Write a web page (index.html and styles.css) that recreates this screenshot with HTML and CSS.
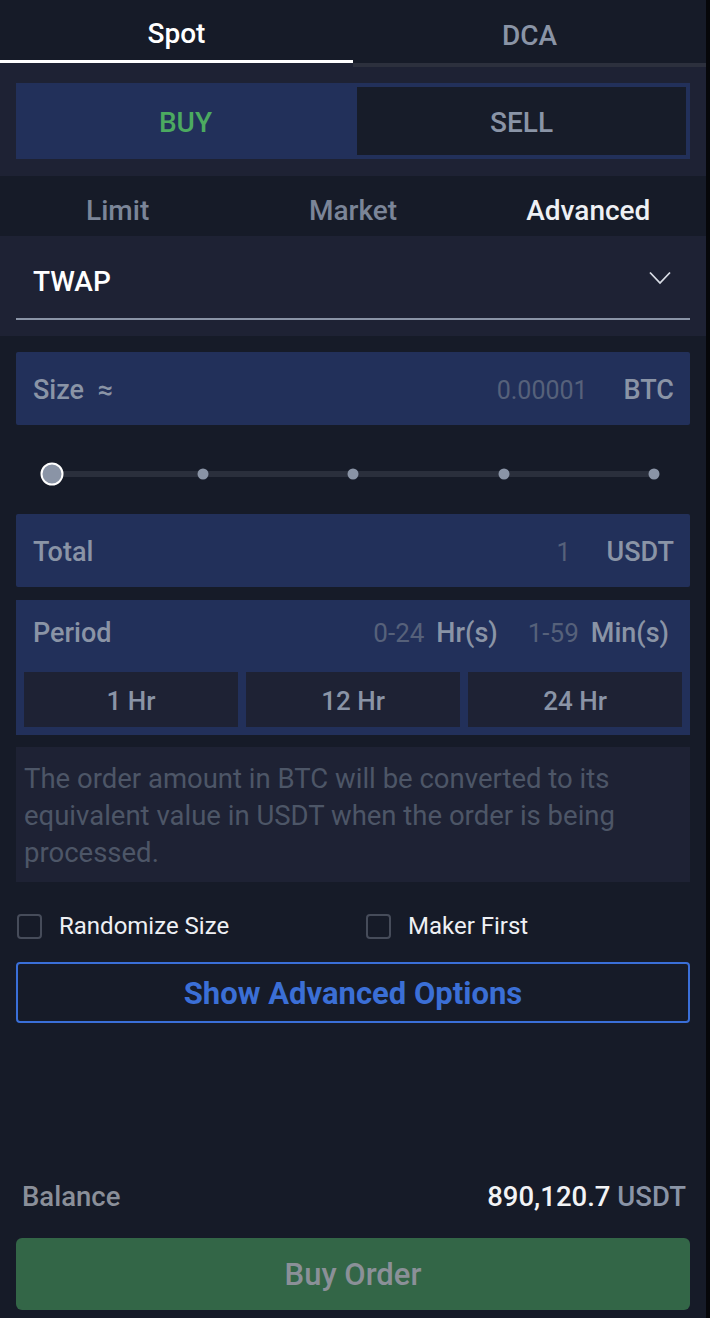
FILE: index.html
```html
<!DOCTYPE html>
<html>
<head>
  <link rel="stylesheet" href="styles.css">
</head>
<body>
  <div class="panel">
    <div class="tabs">
      <div class="tab active">Spot</div>
      <div class="tab dca">DCA</div>
    </div>

    <div class="side-section">
      <div class="side-switch">
        <div class="side buy">BUY</div>
        <div class="side sell">SELL</div>
      </div>
    </div>

    <div class="order-types">
      <div class="order-type">Limit</div>
      <div class="order-type">Market</div>
      <div class="order-type active">Advanced</div>
    </div>

    <div class="algo-section">
      <div class="algo-select">
        <span>TWAP</span>
        <svg class="chevron" width="22" height="14" viewBox="0 0 22 14">
          <polyline points="1,1.5 11,12 21,1.5" fill="none" stroke="#d9dde5" stroke-width="1.8"/>
        </svg>
      </div>
    </div>

    <div class="form">
      <div class="field">
        <span class="field-label">Size &nbsp;≈</span>
        <span class="field-right">
          <span class="field-value">0.00001</span>
          <span class="field-unit">BTC</span>
        </span>
      </div>

      <div class="slider">
        <div class="slider-track"></div>
        <span class="slider-dot" style="left: 25%"></span>
        <span class="slider-dot" style="left: 50%"></span>
        <span class="slider-dot" style="left: 75%"></span>
        <span class="slider-dot" style="left: 100%"></span>
        <span class="slider-thumb" style="left: 0%"></span>
      </div>

      <div class="field">
        <span class="field-label">Total</span>
        <span class="field-right">
          <span class="field-value">1</span>
          <span class="field-unit">USDT</span>
        </span>
      </div>

      <div class="period">
        <div class="period-head">
          <span class="field-label">Period</span>
          <span class="period-inputs">
            <span class="field-value">0-24</span>
            <span class="field-unit">Hr(s)</span>
            <span class="field-value gap">1-59</span>
            <span class="field-unit">Min(s)</span>
          </span>
        </div>
        <div class="period-presets">
          <div class="preset">1 Hr</div>
          <div class="preset">12 Hr</div>
          <div class="preset">24 Hr</div>
        </div>
      </div>

      <div class="notice">
        The order amount in BTC will be converted to its equivalent value in USDT when the order is being processed.
      </div>

      <div class="check-row">
        <label class="check"><span class="check-box"></span>Randomize Size</label>
        <label class="check"><span class="check-box"></span>Maker First</label>
      </div>

      <button class="outline-btn">Show Advanced Options</button>
    </div>

    <div class="footer">
      <div class="balance">
        <span class="balance-label">Balance</span>
        <span class="balance-value">890,120.7 <span class="balance-unit">USDT</span></span>
      </div>
      <button class="submit-btn">Buy Order</button>
    </div>
  </div>
</body>
</html>
```

FILE: styles.css
```css
body {
  margin: 0;
  background: #06070a;
  font-family: Roboto, 'Noto Sans', sans-serif;
  color: #8a94a6;
}

.panel {
  width: 706px;
  height: 1318px;
  background: #161b28;
  display: flex;
  flex-direction: column;
}

/* Spot / DCA tabs */
.tabs {
  display: flex;
  align-items: flex-start;
  background: #1e2234;
}

.tab {
  flex: 1;
  height: 63px;
  display: flex;
  align-items: center;
  justify-content: center;
  background: #161b28;
  font-size: 28px;
  font-weight: 500;
  color: #8a94a6;
  box-sizing: border-box;
  padding-top: 7px;
}

.tab.active {
  color: #fff;
  border-bottom: 3px solid #fff;
}

.tab.dca {
  height: 67px;
  border-bottom: 4px solid #2c303d;
  padding-top: 8px;
}

/* Buy / Sell switch */
.side-section {
  background: #1e2234;
  padding: 16px 16px 17px;
}

.side-switch {
  display: flex;
  height: 76px;
  padding: 4px;
  box-sizing: border-box;
  background: #22305a;
}

.side {
  display: flex;
  align-items: center;
  justify-content: center;
  font-size: 28px;
  font-weight: 500;
  padding-top: 2px;
}

.side.buy {
  width: 337px;
  padding-right: 6px;
  box-sizing: border-box;
  color: #4caa60;
}

.side.sell {
  flex: 1;
  background: #171c29;
  color: #8a94a6;
}

/* Limit / Market / Advanced */
.order-types {
  display: flex;
  height: 60px;
  box-sizing: border-box;
  padding-top: 8px;
}

.order-type {
  flex: 1;
  display: flex;
  align-items: center;
  justify-content: center;
  font-size: 28px;
  font-weight: 500;
  color: #7b8598;
}

.order-type.active {
  color: #eef0f4;
}

/* TWAP select */
.algo-section {
  background: #1e2234;
  padding: 0 16px 16px;
}

.algo-select {
  height: 84px;
  box-sizing: border-box;
  border-bottom: 2px solid #8a94a6;
  display: flex;
  align-items: center;
  justify-content: space-between;
  padding: 8px 19px 0 17px;
  font-size: 28px;
  font-weight: 500;
  color: #fff;
}

.chevron {
  margin-top: -7px;
}

/* form */
.form {
  padding: 16px 16px 0;
}

.field {
  height: 73px;
  box-sizing: border-box;
  padding: 3px 16px 0 17px;
  background: #22305a;
  border-radius: 2px;
  display: flex;
  align-items: center;
  justify-content: space-between;
}

.field-label {
  font-size: 27px;
  font-weight: 500;
  color: #8a94a6;
}

.field-right {
  display: flex;
  align-items: center;
}

.field-value {
  font-size: 25px;
  color: #56617a;
}

.field-unit {
  font-size: 27px;
  font-weight: 500;
  color: #8a94a6;
  margin-left: 36px;
}

.slider {
  position: relative;
  height: 89px;
  margin: 0 36px;
}

.slider-track {
  position: absolute;
  left: 0;
  right: 0;
  top: 46px;
  height: 6px;
  background: #2a2f3c;
}

.slider-dot,
.slider-thumb {
  position: absolute;
  top: 49px;
  border-radius: 50%;
  background: #8a94a6;
  transform: translate(-50%, -50%);
}

.slider-dot {
  width: 11px;
  height: 11px;
}

.slider-thumb {
  width: 23px;
  height: 23px;
  border: 2px solid #fff;
  box-sizing: border-box;
}

.period {
  margin-top: 13px;
  background: #22305a;
  padding: 0 8px 8px;
}

.period-head {
  height: 64px;
  box-sizing: border-box;
  padding: 2px 13px 0 9px;
  display: flex;
  align-items: center;
  justify-content: space-between;
}

.period-inputs {
  display: flex;
  align-items: center;
}

.period-inputs .field-value {
  font-size: 26px;
}

.period-inputs .field-unit {
  margin-left: 12px;
}

.period-inputs .field-value.gap {
  margin-left: 30px;
}

.period-presets {
  margin-top: 8px;
  display: grid;
  grid-template-columns: 1fr 1fr 1fr;
  gap: 8px;
}

.preset {
  height: 55px;
  background: #1e2234;
  display: flex;
  align-items: center;
  justify-content: center;
  font-size: 26px;
  font-weight: 500;
  color: #8a94a6;
  padding-top: 2px;
  box-sizing: border-box;
}

.notice {
  margin-top: 12px;
  height: 135px;
  box-sizing: border-box;
  background: #1e2234;
  padding: 13px 8px 0;
  font-size: 27.5px;
  line-height: 37px;
  color: #4d5667;
}

.check-row {
  margin-top: 32px;
  height: 25px;
  display: grid;
  grid-template-columns: 349px 1fr;
  padding-left: 1px;
}

.check {
  display: flex;
  align-items: center;
  height: 25px;
  font-size: 24px;
  line-height: 25px;
  color: #eef0f4;
}

.check-box {
  width: 25px;
  height: 25px;
  box-sizing: border-box;
  border: 2px solid #464c5a;
  border-radius: 4px;
  margin-right: 17px;
}

.outline-btn {
  display: block;
  width: 100%;
  height: 61px;
  margin-top: 23px;
  padding-top: 2px;
  background: transparent;
  border: 2px solid #3a6fd8;
  border-radius: 4px;
  font-family: inherit;
  font-size: 31px;
  font-weight: 700;
  color: #3b6fd6;
}

/* balance + submit */
.footer {
  margin-top: auto;
  padding: 0 16px 8px;
}

.balance {
  height: 44px;
  display: flex;
  align-items: center;
  justify-content: space-between;
  padding: 0 4px 0 6px;
  font-size: 27.5px;
}

.balance-label {
  font-weight: 500;
  color: #8a8f99;
}

.balance-value {
  font-weight: 500;
  color: #f2f3f5;
}

.balance-unit {
  color: #8a94a6;
}

.submit-btn {
  display: block;
  width: 100%;
  height: 72px;
  margin-top: 20px;
  padding-top: 2px;
  border: none;
  border-radius: 6px;
  background: #336647;
  font-family: inherit;
  font-size: 31px;
  font-weight: 500;
  color: #8b9098;
}
```
